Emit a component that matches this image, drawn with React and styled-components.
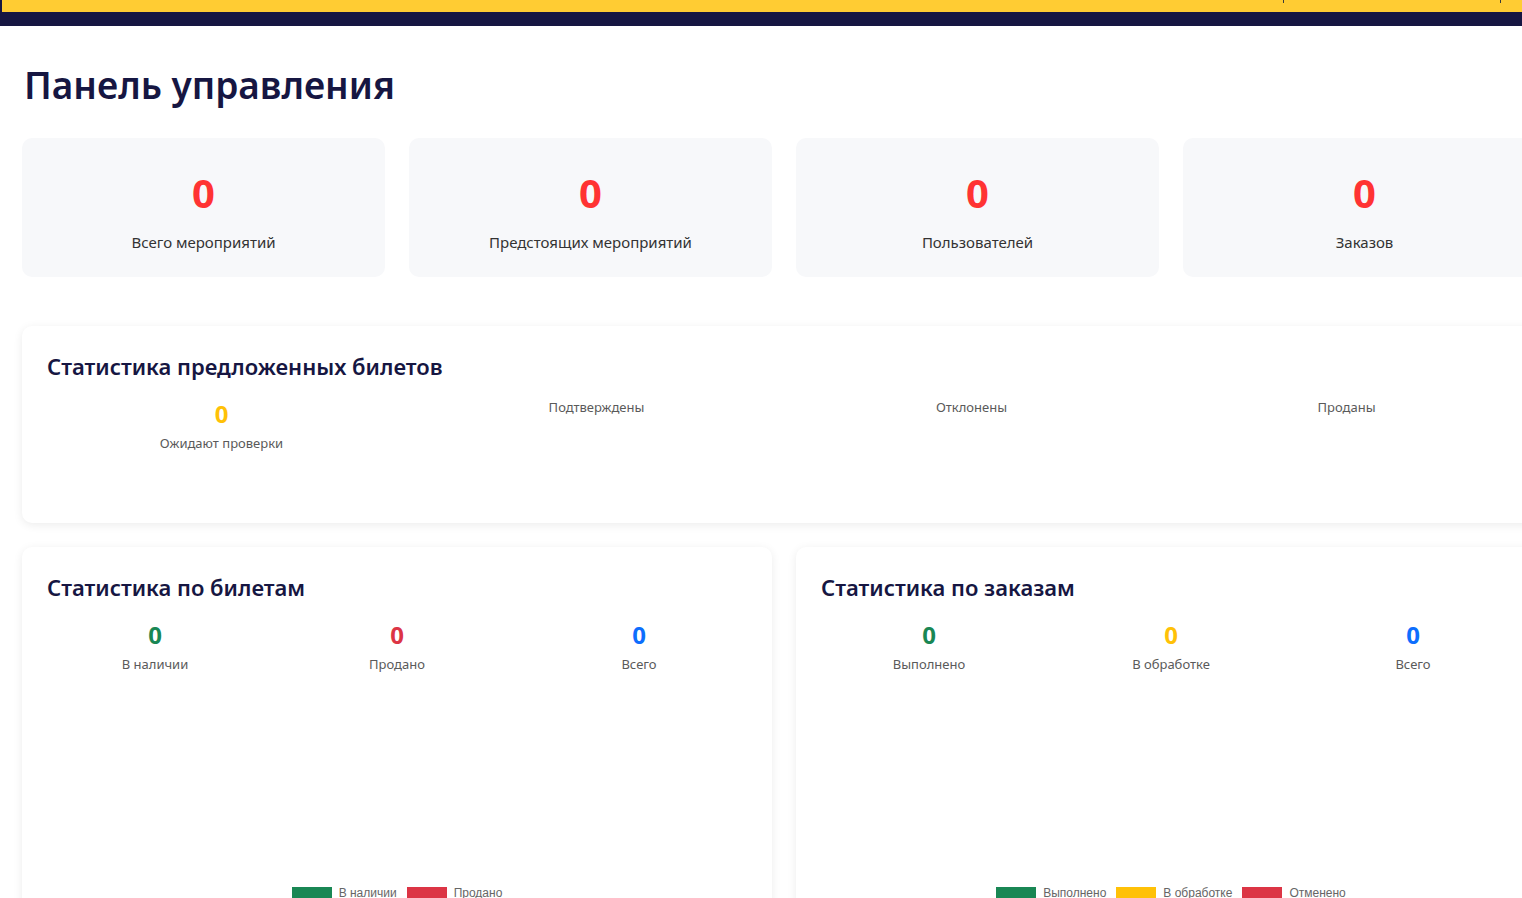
import React from "react";
import styled, { createGlobalStyle } from "styled-components";

const GlobalStyle = createGlobalStyle`
  body {
    margin: 0;
    background: #ffffff;
    font-family: "Noto Sans", "Open Sans", sans-serif;
    overflow: hidden;
  }
`;

const TopBar = styled.header`
  background-color: #161642;
  height: 26px;
  padding-left: 2px;
  box-sizing: border-box;
`;

const YellowStrip = styled.div`
  height: 12px;
  background-color: #ffcc33;
  display: flex;
  justify-content: flex-end;
  align-items: flex-start;
  gap: 216px;
  padding-right: 21px;
`;

const Tick = styled.span`
  width: 1px;
  height: 3px;
  background-color: #3a3a3a;
`;

const Main = styled.main`
  width: 1524px;
  padding: 35px 0 0 22px;
`;

const Title = styled.h1`
  margin: 0 0 29px 2px;
  font-size: 37px;
  line-height: 48px;
  font-weight: 600;
  color: #161642;
`;

const CardGrid = styled.div`
  display: grid;
  grid-template-columns: repeat(4, 1fr);
  gap: 24px;
  margin-bottom: 49px;
`;

const StatCard = styled.div`
  background-color: #f7f8fa;
  border-radius: 10px;
  padding: 31px 20px 24px;
  text-align: center;
`;

const StatNumber = styled.div`
  font-size: 40px;
  line-height: 48px;
  font-weight: 700;
  color: #ff3333;
`;

const StatLabel = styled.div`
  margin-top: 14px;
  font-size: 15px;
  line-height: 22px;
  color: #333333;
`;

const Panel = styled.section`
  background: #ffffff;
  border-radius: 10px;
  box-shadow: 0 2px 10px rgba(0, 0, 0, 0.08);
  padding: 24px;
  box-sizing: border-box;
  min-height: ${p => p.$minHeight || "auto"};
`;

const PanelTitle = styled.h2`
  margin: 0 0 16px 1px;
  font-size: 22px;
  line-height: 32px;
  font-weight: 600;
  color: #161642;
`;

const Row = styled.div`
  display: grid;
  grid-template-columns: repeat(${p => p.$cols}, 1fr);
  margin: 0 -12px;
`;

const Metric = styled.div`
  text-align: center;
  padding: 0 12px;
`;

const MetricNumber = styled.div`
  font-size: 24px;
  line-height: 32px;
  font-weight: 700;
  margin-bottom: 4px;
  color: ${p => p.$color};
`;

const MetricLabel = styled.div`
  font-size: 13px;
  line-height: 18px;
  color: #5a5a5a;
`;

const TwoCols = styled.div`
  display: grid;
  grid-template-columns: 1fr 1fr;
  gap: 24px;
  margin-top: 24px;
`;

const ChartArea = styled.div`
  margin-top: 204px;
  padding-top: 10px;
  height: 300px;
`;

const Legend = styled.div`
  display: flex;
  justify-content: center;
  gap: 10px;
  font-family: "Liberation Sans", Arial, sans-serif;
  font-size: 12px;
  line-height: 12px;
  color: #666666;
`;

const LegendItem = styled.div`
  display: flex;
  align-items: center;
  gap: 7px;
`;

const Swatch = styled.span`
  width: 40px;
  height: 12px;
  box-sizing: border-box;
  background-color: ${p => p.$color};
  border: 1px solid ${p => p.$color}cc;
`;

const COLORS = {
  green: "#198754",
  red: "#dc3545",
  blue: "#0d6efd",
  yellow: "#ffc107",
};

const summary = [
  "Всего мероприятий",
  "Предстоящих мероприятий",
  "Пользователей",
  "Заказов",
];

const offers = [
  { label: "Ожидают проверки", value: 0, color: COLORS.yellow },
  { label: "Подтверждены" },
  { label: "Отклонены" },
  { label: "Проданы" },
];

const tickets = [
  { label: "В наличии", value: 0, color: COLORS.green },
  { label: "Продано", value: 0, color: COLORS.red },
  { label: "Всего", value: 0, color: COLORS.blue },
];

const orders = [
  { label: "Выполнено", value: 0, color: COLORS.green },
  { label: "В обработке", value: 0, color: COLORS.yellow },
  { label: "Всего", value: 0, color: COLORS.blue },
];

const ticketLegend = [
  { label: "В наличии", color: COLORS.green },
  { label: "Продано", color: COLORS.red },
];

const orderLegend = [
  { label: "Выполнено", color: COLORS.green },
  { label: "В обработке", color: COLORS.yellow },
  { label: "Отменено", color: COLORS.red },
];

const Metrics = ({ items }) => (
  <Row $cols={items.length}>
    {items.map(item => (
      <Metric key={item.label}>
        {item.value !== undefined ? (
          <MetricNumber $color={item.color}>{item.value}</MetricNumber>
        ) : null}
        <MetricLabel>{item.label}</MetricLabel>
      </Metric>
    ))}
  </Row>
);

const ChartPanel = ({ title, items, legend }) => (
  <Panel>
    <PanelTitle>{title}</PanelTitle>
    <Metrics items={items} />
    <ChartArea>
      <Legend>
        {legend.map(l => (
          <LegendItem key={l.label}>
            <Swatch $color={l.color} />
            {l.label}
          </LegendItem>
        ))}
      </Legend>
    </ChartArea>
  </Panel>
);

const App = () => {
  return (
    <>
      <GlobalStyle />
      <TopBar>
        <YellowStrip>
          <Tick />
          <Tick />
        </YellowStrip>
      </TopBar>
      <Main>
        <Title>Панель управления</Title>
        <CardGrid>
          {summary.map(label => (
            <StatCard key={label}>
              <StatNumber>0</StatNumber>
              <StatLabel>{label}</StatLabel>
            </StatCard>
          ))}
        </CardGrid>

        <Panel $minHeight="197px">
          <PanelTitle>Статистика предложенных билетов</PanelTitle>
          <Metrics items={offers} />
        </Panel>

        <TwoCols>
          <ChartPanel
            title="Статистика по билетам"
            items={tickets}
            legend={ticketLegend}
          />
          <ChartPanel
            title="Статистика по заказам"
            items={orders}
            legend={orderLegend}
          />
        </TwoCols>
      </Main>
    </>
  );
};

export default App;
